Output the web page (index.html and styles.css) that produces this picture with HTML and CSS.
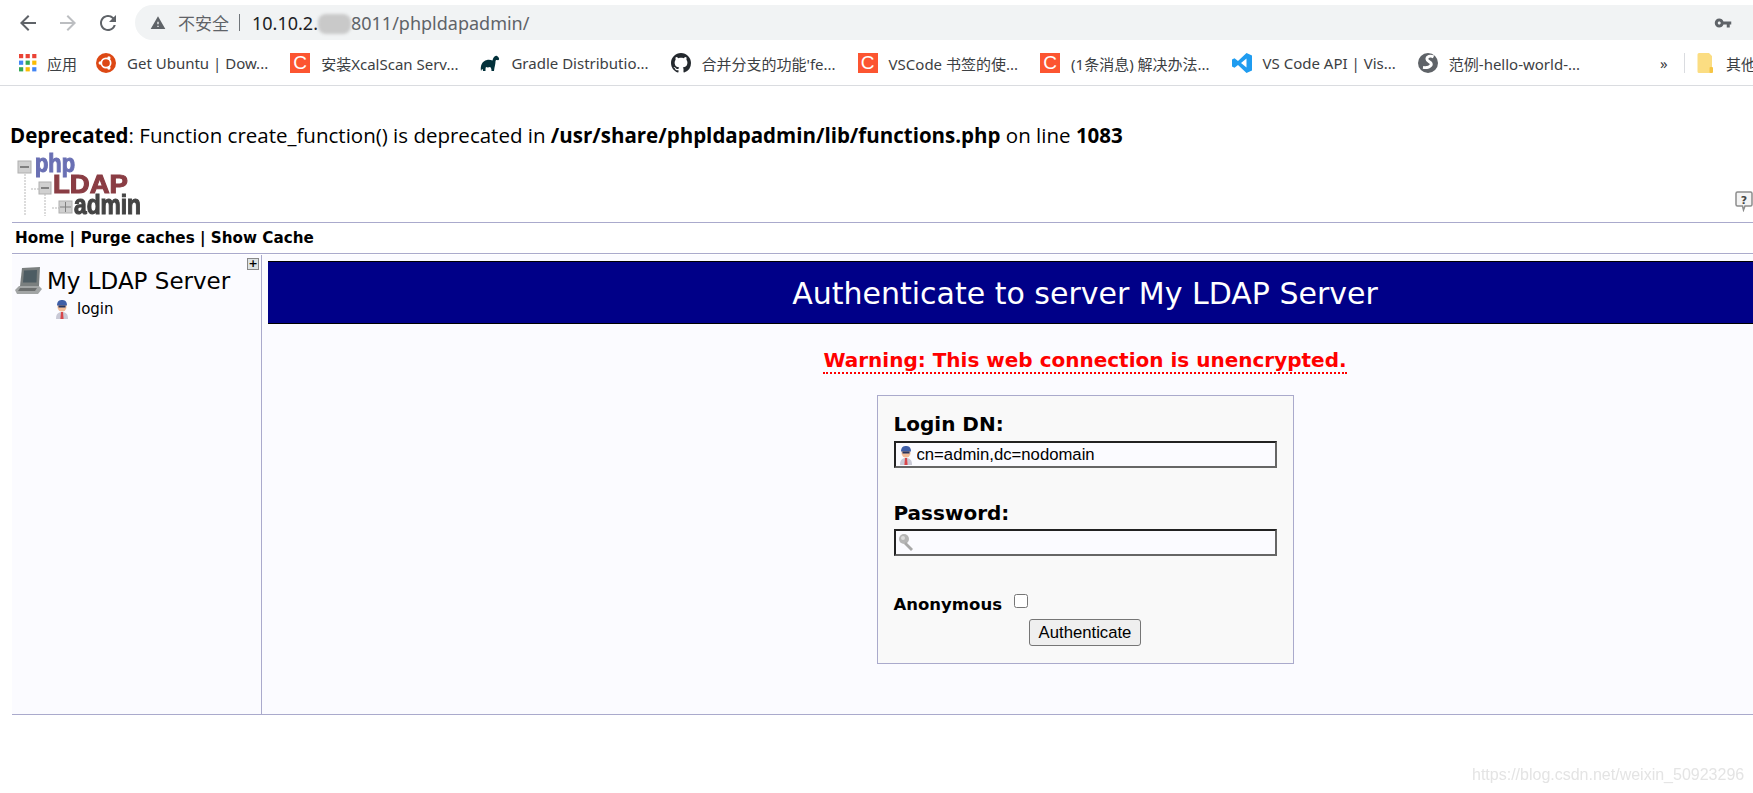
FILE: index.html

```html
<!DOCTYPE html>
<html lang="en">
<head>
  <meta charset="UTF-8">
  <meta name="viewport" content="width=device-width, initial-scale=1">
  <title>phpLDAPadmin</title>
  <link rel="stylesheet" href="styles.css">
</head>
<body>

  <svg class="sprites" width="0" height="0">
    <symbol id="i-user" viewBox="0 0 16 20">
      <path d="M2 20c0-5 2-7 6-7s6 2 6 7z" fill="#c9c9d6"/>
      <path d="M7 13h2l.6 7H6.400z" fill="#d8454a"/>
      <circle cx="8" cy="8" r="4.500" fill="#f1bc98"/>
      <path d="M3 6.500C3 2 5.500 1 8 1s5 1 5 5.500z" fill="#3f5fa8"/>
      <rect x="4.500" y="6.500" width="7" height="2" fill="#27355f"/>
    </symbol>
  </svg>

  <div class="browser">
    <div class="toolbar">
      <svg class="nav-icon" viewBox="0 0 24 24" fill="#5f6368"><path d="M20 11H7.830l5.590-5.590L12 4l-8 8 8 8 1.410-1.410L7.830 13H20v-2z"/></svg>
      <svg class="nav-icon" viewBox="0 0 24 24" fill="#bcbec1"><path d="M12 4l-1.410 1.410L16.170 11H4v2h12.170l-5.580 5.590L12 20l8-8z"/></svg>
      <svg class="nav-icon" viewBox="0 0 24 24" fill="#5f6368"><path d="M17.650 6.350A7.958 7.958 0 0 0 12 4c-4.420 0-7.990 3.580-7.990 8s3.570 8 7.990 8c3.730 0 6.840-2.550 7.730-6h-2.080A5.990 5.990 0 0 1 12 18c-3.310 0-6-2.690-6-6s2.690-6 6-6c1.660 0 3.140.69 4.220 1.780L13 11h7V4l-2.350 2.350z"/></svg>
      <div class="omnibox">
        <svg class="warn-icon" viewBox="0 0 24 24" fill="#5f6368"><path d="M1 21h22L12 2 1 21zm12-3h-2v-2h2v2zm0-4h-2v-4h2v4z"/></svg>
        <span class="insecure">不安全</span>
        <span class="url-sep"></span>
        <span class="url"><b>10.10.2.</b><span class="smudge"></span>8011/phpldapadmin/</span>
        <svg class="key-icon" viewBox="0 0 24 24" fill="#5f6368"><path d="M12.650 10A5.990 5.990 0 0 0 7 6c-3.310 0-6 2.690-6 6s2.690 6 6 6a5.990 5.990 0 0 0 5.650-4H17v4h4v-4h2v-4H12.650zM7 14c-1.100 0-2-.9-2-2s.9-2 2-2 2 .9 2 2-.9 2-2 2z"/></svg>
      </div>
    </div>

    <div class="bookmarks">
      <div class="bm bm-apps">
        <svg class="bm-icon" viewBox="0 0 15 15">
          <rect width="3.500" height="3.500" fill="#ea4335"/><rect x="5.500" width="3.500" height="3.500" fill="#ea4335"/><rect x="11" width="3.500" height="3.500" fill="#ea4335"/>
          <rect y="5.500" width="3.500" height="3.500" fill="#4285f4"/><rect x="5.500" y="5.500" width="3.500" height="3.500" fill="#34a853"/><rect x="11" y="5.500" width="3.500" height="3.500" fill="#fbbc04"/>
          <rect y="11" width="3.500" height="3.500" fill="#34a853"/><rect x="5.500" y="11" width="3.500" height="3.500" fill="#fbbc04"/><rect x="11" y="11" width="3.500" height="3.500" fill="#4285f4"/>
        </svg>
        <span>应用</span>
      </div>
      <div class="bm">
        <svg class="bm-icon" viewBox="0 0 18 18">
          <circle cx="9" cy="9" r="9" fill="#dd4814"/>
          <circle cx="9" cy="9" r="4.200" fill="none" stroke="#fff" stroke-width="1.500"/>
          <circle cx="3.800" cy="9" r="1.500" fill="#fff"/><circle cx="11.600" cy="4.500" r="1.500" fill="#fff"/><circle cx="11.600" cy="13.500" r="1.500" fill="#fff"/>
        </svg>
        <span>Get Ubuntu | Dow...</span>
      </div>
      <div class="bm"><span class="csdn">C</span><span>安装XcalScan Serv...</span></div>
      <div class="bm">
        <svg class="bm-icon" viewBox="0 0 20 18" fill="#02303a">
          <path d="M1 17c-1-5 1-10 6-11 2-.5 4 0 5.500.5C13 3.500 15 1 17 2c1.500.7 2.500 2.500 2 3.500-.5 1-1.500.5-2.500.5-.5 0-1 .5-1 1.500 0 3-1 5-1.500 9.500h-2.500c0-2-.5-3.500-1.500-4-1.500.5-3 .5-4 0-.5 1-.5 2.500-.5 4H3c0-1.500-.5-2-1-2z"/>
        </svg>
        <span>Gradle Distributio...</span>
      </div>
      <div class="bm">
        <svg class="bm-icon" viewBox="0 0 16 16" fill="#24292e"><path d="M8 0C3.580 0 0 3.580 0 8c0 3.540 2.290 6.530 5.470 7.590.4.070.55-.17.55-.38 0-.19-.01-.82-.01-1.490-2.010.37-2.530-.49-2.690-.94-.09-.23-.48-.94-.82-1.130-.28-.15-.68-.52-.01-.53.63-.01 1.080.58 1.230.82.72 1.210 1.870.87 2.330.66.07-.52.28-.87.51-1.070-1.780-.2-3.640-.89-3.640-3.950 0-.87.31-1.590.82-2.150-.08-.2-.36-1.020.08-2.120 0 0 .67-.21 2.200.82.64-.18 1.320-.27 2-.27.68 0 1.360.09 2 .27 1.530-1.040 2.200-.82 2.200-.82.44 1.100.16 1.920.08 2.120.51.56.82 1.270.82 2.150 0 3.070-1.870 3.750-3.650 3.950.29.25.54.73.54 1.480 0 1.070-.01 1.930-.01 2.200 0 .21.15.46.55.38A8.013 8.013 0 0 0 16 8c0-4.420-3.580-8-8-8z"/></svg>
        <span>合并分支的功能'fe...</span>
      </div>
      <div class="bm"><span class="csdn">C</span><span>VSCode 书签的使...</span></div>
      <div class="bm"><span class="csdn">C</span><span>(1条消息) 解决办法...</span></div>
      <div class="bm">
        <svg class="bm-icon" viewBox="0 0 20 20">
          <path d="M14.500 0L20 2.500v15L14.500 20 6 12l-3.500 2.800L0 13.500v-7l2.500-1.300L6 8zM14.500 5.500L9 10l5.500 4.500z" fill="#1f9cf0"/>
        </svg>
        <span>VS Code API | Vis...</span>
      </div>
      <div class="bm">
        <svg class="bm-icon" viewBox="0 0 18 18">
          <circle cx="9" cy="9" r="9" fill="#5f6368"/>
          <path d="M14 3.500c-3-1.500-6-.5-6 2s4 2 4 4.500-4 3.500-7.500 3" fill="none" stroke="#fff" stroke-width="2.600"/>
        </svg>
        <span>范例-hello-world-...</span>
      </div>
      <div class="bm-more">
        <span class="chevrons">»</span>
        <span class="bm-sep"></span>
        <svg class="folder" viewBox="0 0 16 20">
          <path d="M1.500 0h10l3 3v15.500a1.500 1.500 0 0 1-1.500 1.500H1.500A1.500 1.500 0 0 1 0 18.500v-17A1.500 1.500 0 0 1 1.500 0z" fill="#fbdd82"/>
          <rect x="12" y="14" width="3.500" height="6" rx="1" fill="#f6c544"/>
        </svg>
        <span>其他</span>
      </div>
    </div>
  </div>

  <p class="deprecated"><b>Deprecated</b>: Function create_function() is deprecated in <b>/usr/share/phpldapadmin/lib/functions.php</b> on line <b>1083</b></p>

  <div class="page">
    <div class="logo-row">
      <svg class="logo" viewBox="0 0 130 70" width="130" height="70">
        <g stroke="#dcdcdc" stroke-dasharray="2 1" fill="none" stroke-width="2">
          <path d="M9 24V66M29 44V66M15 39H23M36 58H43"/>
        </g>
        <rect x="2" y="11" width="13" height="12" fill="#d0d0d0" stroke="#b0b0b0"/>
        <rect x="4" y="16" width="9" height="2" fill="#808080"/>
        <rect x="23" y="32" width="12" height="12" fill="#d0d0d0" stroke="#b0b0b0"/>
        <rect x="25" y="37" width="8" height="2" fill="#808080"/>
        <rect x="43" y="51" width="13" height="12" fill="#d0d0d0" stroke="#b0b0b0"/>
        <path d="M49.500 52V62M44 57H55" stroke="#808080"/>
        <text class="logo-text php" x="19" y="22" font-size="25" textLength="40" lengthAdjust="spacingAndGlyphs">php</text>
        <text class="logo-text ldap" x="37" y="43" font-size="26" textLength="75" lengthAdjust="spacingAndGlyphs">LDAP</text>
        <text class="logo-text adm" x="58" y="64" font-size="28" textLength="67" lengthAdjust="spacingAndGlyphs">admin</text>
      </svg>
      <svg class="help" viewBox="0 0 18 21" width="18" height="21">
        <path d="M2.500 1h13A1.500 1.500 0 0 1 17 2.500v11a1.500 1.500 0 0 1-1.500 1.500H10l-1.500 4-1-4H2.500A1.500 1.500 0 0 1 1 13.500v-11A1.500 1.500 0 0 1 2.500 1z" fill="#f4f4f4" stroke="#8c8c8c" stroke-width="1.500"/>
        <text class="help-mark" x="9" y="12.500" text-anchor="middle">?</text>
      </svg>
    </div>

    <div class="menu">Home | Purge caches | Show Cache</div>

    <div class="columns">
      <div class="sidebar">
        <div class="tree-expand">+</div>
        <div class="server">
          <svg class="server-icon" viewBox="0 0 27 28" width="27" height="28">
            <path d="M7 1l18-1-1 19H5z" fill="#7a7f7f"/>
            <path d="M9 3.500l13-.5-.5 12.500H8z" fill="#4d5c63"/>
            <path d="M4 19h20l3 3-4 5H2l-2-4z" fill="#a2a5a5"/>
            <path d="M5 21h17l-2 3H3z" fill="#6c6f6f"/>
          </svg>
          <span>My LDAP Server</span>
        </div>
        <div class="tree-login">
          <svg width="16" height="20"><use href="#i-user"/></svg>
          <span>login</span>
        </div>
      </div>

      <div class="main">
        <h3 class="title">Authenticate to server My LDAP Server</h3>
        <div class="warning"><span>Warning: This web connection is unencrypted.</span></div>

        <div class="login-box">
          <label class="field-label">Login DN:</label>
          <div class="field">
            <svg width="16" height="20"><use href="#i-user"/></svg>
            <input type="text" value="cn=admin,dc=nodomain">
          </div>
          <label class="field-label field-second">Password:</label>
          <div class="field">
            <svg width="17" height="19" viewBox="0 0 17 19">
              <circle cx="6" cy="6" r="5" fill="#b5b5b5"/>
              <path d="M8 9l7 7-2 2-7-7z" fill="#a8a8a8"/>
              <circle cx="5" cy="5" r="2" fill="#dcdcdc"/>
            </svg>
            <input type="password">
          </div>
          <div class="anon">
            <span>Anonymous</span>
            <input type="checkbox">
          </div>
          <div class="submit-row"><button type="button">Authenticate</button></div>
        </div>
      </div>
    </div>
  </div>

  <div class="watermark">https://blog.csdn.net/weixin_50923296</div>

</body>
</html>
```

FILE: styles.css

```css
html, body {
  margin: 0;
  height: 793px;
  overflow: hidden;
  background-color: white;
}

body {
  position: relative;
  font-family: "DejaVu Sans", sans-serif;
  color: black;
}

.sprites {
  position: absolute;
}

/* browser chrome */
.browser {
  height: 85px;
  border-bottom: 1px solid #dadce0;
  font-family: "Noto Sans", "Noto Sans CJK SC", sans-serif;
}

.toolbar {
  height: 45px;
  display: flex;
  align-items: center;
}

.nav-icon {
  width: 24px;
  height: 24px;
  margin-left: 16px;
  flex: none;
}

.omnibox {
  margin-left: 15px;
  flex: 1;
  height: 35px;
  display: flex;
  align-items: center;
  background-color: #f1f3f4;
  border-radius: 18px 0 0 18px;
  color: #5f6368;
}

.warn-icon {
  width: 16px;
  height: 16px;
  margin-left: 15px;
}

.insecure {
  margin-left: 12px;
  font-size: 17px;
}

.url-sep {
  width: 1px;
  height: 17px;
  background-color: #70757a;
  margin: 0 12px 0 10px;
}

.url {
  font-size: 18px;
}

.url b {
  font-weight: normal;
  color: #202124;
}

.smudge {
  display: inline-block;
  width: 33px;
  height: 20px;
  vertical-align: -4px;
  background-color: #c9c9c9;
  border-radius: 8px;
  filter: blur(1.5px);
}

.key-icon {
  width: 18px;
  height: 18px;
  margin-left: auto;
  margin-right: 21px;
}

.bookmarks {
  height: 36px;
  display: flex;
  align-items: center;
  padding-left: 19px;
  font-size: 15px;
  color: #3c4043;
  white-space: nowrap;
}

.bm {
  display: flex;
  align-items: center;
  gap: 11px;
  margin-right: 22px;
}

.bm-icon {
  width: 20px;
  height: 20px;
  flex: none;
}

.bm-apps {
  gap: 10px;
  margin-right: 19px;
}

.bm-apps .bm-icon {
  width: 18px;
  height: 18px;
}

.csdn {
  width: 20px;
  height: 20px;
  background-color: #fc5531;
  color: white;
  font-family: "Liberation Sans", sans-serif;
  font-size: 19px;
  line-height: 20px;
  text-align: center;
}

.bm-more {
  margin-left: auto;
  width: 93px;
  flex: none;
  display: flex;
  align-items: center;
  overflow: hidden;
}

.chevrons {
  font-size: 15px;
  width: 24px;
  flex: none;
}

.bm-sep {
  width: 1px;
  height: 20px;
  flex: none;
  background-color: #dadce0;
  margin-right: 12px;
}

.folder {
  width: 17px;
  height: 20px;
  flex: none;
  margin-right: 12px;
}

/* php notice */
.deprecated {
  margin: 0;
  padding: 0 0 0 10px;
  height: 64px;
  line-height: 98px;
  font-family: "Open Sans", sans-serif;
  font-size: 20.5px;
  white-space: nowrap;
}

/* phpldapadmin page */
.page {
  width: 1890px;
  margin-left: 12px;
}

.logo-row {
  width: 1741px;
  height: 72px;
  display: flex;
  justify-content: space-between;
  align-items: flex-end;
}

.logo {
  margin-left: 4px;
  margin-bottom: 2px;
  overflow: visible;
}

.logo-text {
  font-family: "Liberation Sans", sans-serif;
  font-weight: bold;
  stroke-width: 1.1;
  filter: blur(0.4px);
}

.php {
  fill: #6a70b4;
  stroke: #6a70b4;
}

.ldap {
  fill: #8a3d44;
  stroke: #8a3d44;
}

.adm {
  fill: #444;
  stroke: #444;
}

.help {
  margin-bottom: 10px;
}

.help-mark {
  font-family: "DejaVu Sans", sans-serif;
  font-size: 11px;
  font-weight: bold;
  fill: #444;
}

.menu {
  height: 32px;
  box-sizing: border-box;
  border-top: 1px solid #aaaacc;
  border-bottom: 1px solid #aaaacc;
  line-height: 30px;
  padding-left: 3px;
  font-size: 15.2px;
  font-weight: bold;
}

.columns {
  display: flex;
  height: 459px;
  margin-top: 1px;
  border-bottom: 1px solid #aaaacc;
  background-color: #fbfbff;
}

.sidebar {
  position: relative;
  width: 249px;
  flex: none;
  border-right: 1px solid #aaaacc;
}

.tree-expand {
  position: absolute;
  top: 3px;
  right: 2px;
  width: 10px;
  height: 10px;
  border: 1px solid #888;
  background-color: #dde3e3;
  font-size: 11px;
  font-weight: bold;
  line-height: 9px;
  text-align: center;
}

.server {
  display: flex;
  align-items: center;
  gap: 5px;
  margin-top: 11px;
  padding-left: 3px;
  font-size: 23px;
  height: 30px;
}

.tree-login {
  display: flex;
  align-items: center;
  gap: 7px;
  margin-top: 3px;
  padding-left: 42px;
  font-size: 15px;
}

.main {
  flex: 1;
  padding: 6px 0 0 6px;
  min-width: 0;
}

.title {
  margin: 0;
  height: 61px;
  line-height: 63px;
  background-color: #000088;
  border: 1px solid black;
  border-width: 1px 0;
  color: white;
  font-size: 30px;
  font-weight: normal;
  text-align: center;
}

.warning {
  margin-top: 24px;
  text-align: center;
  font-size: 20px;
  font-weight: bold;
  color: red;
}

.warning span {
  border-bottom: 2px dotted red;
}

.login-box {
  width: 383px;
  height: 267px;
  margin: 23px auto 0;
  padding: 0 16px;
  border: 1px solid #aaaacc;
  background-color: #f9f9f9;
  display: flex;
  flex-direction: column;
}

.field-label {
  margin-top: 14px;
  margin-bottom: 2px;
  font-size: 20px;
  font-weight: bold;
  line-height: 29px;
}

.field-second {
  margin-top: 31px;
  margin-bottom: 1px;
}

.field {
  height: 23px;
  display: flex;
  align-items: center;
  gap: 3px;
  background-color: #fbfbff;
  border: 2px solid;
  border-color: #222 #666 #666 #222;
  overflow: hidden;
}

.field svg {
  flex: none;
  margin-left: 2px;
}

.field input {
  flex: 1;
  min-width: 0;
  border: none;
  outline: none;
  padding: 0;
  background: none;
  font-family: "Liberation Sans", sans-serif;
  font-size: 16.7px;
}

.anon {
  display: flex;
  align-items: center;
  gap: 12px;
  margin-top: 38px;
  font-size: 16.5px;
  font-weight: bold;
}

.anon input {
  margin: 0 0 6px;
  width: 14px;
  height: 14px;
}

.submit-row {
  margin-top: 5px;
  text-align: center;
}

.submit-row button {
  width: 112px;
  height: 27px;
  padding: 0;
  background-color: #efefef;
  border: 1px solid #767676;
  border-radius: 3px;
  font-family: "Liberation Sans", sans-serif;
  font-size: 16.7px;
  color: black;
}

.watermark {
  position: absolute;
  left: 1472px;
  top: 766px;
  font-family: "Liberation Sans", sans-serif;
  font-size: 16px;
  color: #e4e4e4;
  filter: blur(0.4px);
  white-space: nowrap;
}
```
